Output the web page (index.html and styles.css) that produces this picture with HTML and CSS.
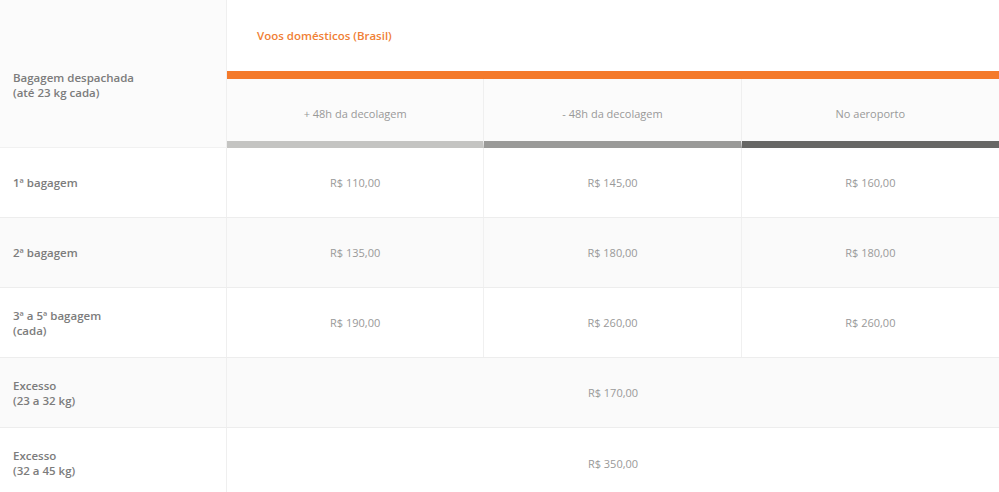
FILE: index.html
```html
<!DOCTYPE html>
<html lang="pt-BR">
<head>
    <meta charset="UTF-8">
    <meta name="viewport" content="width=device-width, initial-scale=1.0">
    <title>Bagagem despachada</title>
    <link rel="stylesheet" href="styles.css">
</head>
<body>

    <div class="fares">
        <div class="head">
            <div class="corner">Bagagem despachada<br>(até 23 kg cada)</div>
            <div class="region">Voos domésticos (Brasil)</div>
            <div class="when early">+ 48h da decolagem</div>
            <div class="when late">- 48h da decolagem</div>
            <div class="when airport">No aeroporto</div>
        </div>

        <div class="row">
            <div class="label">1ª bagagem</div>
            <div class="price">R$ 110,00</div>
            <div class="price">R$ 145,00</div>
            <div class="price">R$ 160,00</div>
        </div>

        <div class="row alt">
            <div class="label">2ª bagagem</div>
            <div class="price">R$ 135,00</div>
            <div class="price">R$ 180,00</div>
            <div class="price">R$ 180,00</div>
        </div>

        <div class="row">
            <div class="label">3ª a 5ª bagagem<br>(cada)</div>
            <div class="price">R$ 190,00</div>
            <div class="price">R$ 260,00</div>
            <div class="price">R$ 260,00</div>
        </div>

        <div class="row alt">
            <div class="label">Excesso<br>(23 a 32 kg)</div>
            <div class="price wide">R$ 170,00</div>
        </div>

        <div class="row last">
            <div class="label">Excesso<br>(32 a 45 kg)</div>
            <div class="price wide">R$ 350,00</div>
        </div>
    </div>

</body>
</html>
```

FILE: styles.css
```css
* {
    box-sizing: border-box;
}
body {
    margin: 0;
    font-family: "Open Sans", "Noto Sans", sans-serif;
    font-size: 11px;
    line-height: 15px;
    background-color: #ffffff;
    color: #999999;
}
.head, .row {
    display: grid;
    grid-template-columns: 227px repeat(3, 1fr);
}
.head {
    grid-template-rows: 79px 69px;
}
.corner {
    grid-row: 1 / 3;
    display: flex;
    align-items: center;
    padding-left: 13px;
    padding-top: 22px;
    background-color: #fbfbfb;
    border-right: 1px solid #efefef;
    border-bottom: 1px solid #f1f1f1;
    font-size: 11.5px;
    font-weight: 600;
    color: #7c7c7c;
}
.region {
    grid-column: 2 / 5;
    padding: 28px 0 0 30px;
    border-bottom: 8px solid #f47a2b; /* faixa laranja */
    font-size: 11.5px;
    font-weight: 600;
    color: #f08035;
}
.when {
    display: flex;
    align-items: center;
    justify-content: center;
    padding-top: 6px;
    background-color: #fbfbfb;
    border-right: 1px solid #efefef;
    border-bottom: 7px solid;
}
.when:last-child {
    border-right: none;
}
.early {
    border-bottom-color: #c4c4c2;
}
.late {
    border-bottom-color: #9a9a98;
}
.airport {
    border-bottom-color: #676765;
}
.row {
    height: 70px;
    border-bottom: 1px solid #ededed;
}
.row.alt {
    background-color: #fafafa;
}
.row.last {
    border-bottom: none;
}
.label {
    display: flex;
    align-items: center;
    padding-left: 13px;
    border-right: 1px solid #efefef;
    font-size: 11.5px;
    font-weight: 600;
    color: #7c7c7c;
}
.price {
    display: flex;
    align-items: center;
    justify-content: center;
    border-right: 1px solid #f0f0f0;
}
.price:last-child {
    border-right: none;
}
.price.wide {
    grid-column: 2 / 5;
}
```
